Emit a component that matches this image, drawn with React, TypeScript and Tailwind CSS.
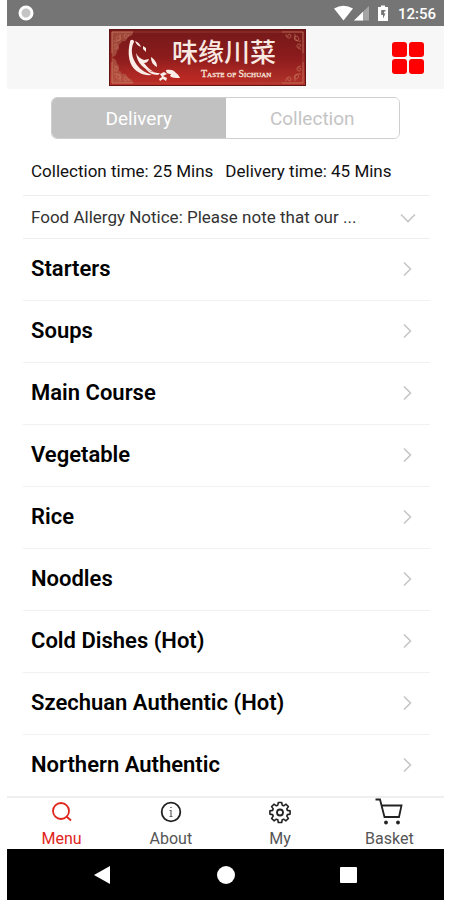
import { useState } from "react";

const categories = [
  "Starters",
  "Soups",
  "Main Course",
  "Vegetable",
  "Rice",
  "Noodles",
  "Cold Dishes (Hot)",
  "Szechuan Authentic (Hot)",
  "Northern Authentic",
];

function StatusBar() {
  return (
    <div className="flex h-[26px] items-center justify-between bg-[#757575] pr-2 pl-[11px] text-white">
      <svg width="16" height="16" viewBox="0 0 16 16" aria-hidden="true">
        <circle cx="8" cy="8" r="5" fill="#c4c4c4" />
        <circle cx="8" cy="8" r="6" fill="none" stroke="#fff" strokeWidth="3" />
      </svg>
      <div className="flex items-center pt-0.5">
        <svg width="56" height="18" viewBox="0 0 56 18" aria-hidden="true">
          <path d="M0 3.500Q9.500-2 19 3.500L9.500 15.500Z" fill="#fff" />
          <path d="M35 1V15.500H20Z" fill="#a5a5a5" />
          <path d="M29 6.800V15.500H20Z" fill="#fff" />
          <path d="M47 0.500h4v1.500h3v14H44v-14h3Z" fill="#fff" />
          <path d="M47.200 5h4.300v1.500h-1.500l.2 2h1.300l-2.500 5v-3.500h-1.800Z" fill="#757575" />
        </svg>
        <span className="ml-2 text-[15px] leading-5 font-medium">12:56</span>
      </div>
    </div>
  );
}

function CornerOrnament({ transform, filled }: { transform?: string; filled?: boolean }) {
  return (
    <g transform={transform} opacity={filled ? 0.75 : 0.6}>
      {filled && (
        <path
          d="M3 3H24c0 4-3 5-6 4 1 4-2 6-5 5-1 3-3 4-4 3 2 3 1 6-1 7 0 3-2 6-5 6Z"
          fill="#b5654f"
          opacity="0.8"
        />
      )}
      <path
        d="M3 24V3H24M5 20c5 0 5-5 2-5s-2 4 1 3M20 5c0 5-5 5-5 2s4-2 3 1M5 12c4 1 7-2 6-7M11 11c-3 2-5-1-3-3s5 0 3 3"
        fill="none"
        stroke="#cd8268"
        strokeWidth="1"
      />
    </g>
  );
}

function Logo() {
  return (
    <svg width="197" height="57" viewBox="0 0 197 57" role="img" aria-label="Taste of Sichuan">
      <defs>
        <linearGradient id="shade" x1="0" y1="0" x2="0" y2="1">
          <stop offset="0" stopColor="#74191a" />
          <stop offset="0.500" stopColor="#8c1b1c" />
          <stop offset="1" stopColor="#b4332b" />
        </linearGradient>
        <radialGradient id="glow" cx="0.400" cy="1" r="0.500">
          <stop offset="0" stopColor="#c8241f" stopOpacity="0.700" />
          <stop offset="1" stopColor="#c8241f" stopOpacity="0" />
        </radialGradient>
      </defs>
      <rect width="197" height="57" fill="url(#shade)" />
      <rect width="197" height="57" fill="url(#glow)" />
      <rect x="0.500" y="0.500" width="196" height="56" fill="none" stroke="#651414" />
      <rect x="3" y="3" width="191" height="51" fill="none" stroke="#b65a47" strokeWidth="1" opacity="0.500" />
      <CornerOrnament filled />
      <CornerOrnament filled transform="translate(0 57) scale(1 -1)" />
      <CornerOrnament transform="translate(197 0) scale(-1 1)" />
      <CornerOrnament transform="translate(197 57) scale(-1 -1)" />
      <g fill="#fbeee8">
        <path d="M21 13c0-3 4-3 4 0-3 5-3 13 1 20 4 7 9 10 17 13-9 1-16-3-20-9-4-7-4-16-2-24Z" />
        <path d="M26 12c3 1 5 3 6 6-3-1-5-3-6-6Z" />
        <path d="M34 17l3 2v4l-3-3Z" />
        <path d="M27 24c2 4 5 6 8 7l5-1c-1 3-3 4-5 4 3 4 6 7 10 9-10-2-17-9-18-19Z" />
        <path d="M42 28c3 2 6 5 6 10-4-2-6-5-6-10Z" />
        <path d="M35 37c4 5 9 7 16 7l-2 2c-6 0-11-3-14-9Z" />
        <path d="M57 41c5-1 8 0 10 3 2 1 3 3 4 5-5 0-8 0-10-2l1-2c-3 0-5-1-5-4Z" />
        <path d="M51 45l4-2 3 2-4 2 4 2-1 3-3-2-3 2-1-2 3-2Z" />
      </g>
      <text
        x="63"
        y="33"
        fill="#f8e9e2"
        fontSize="26"
        fontWeight="500"
        className="font-['Noto_Sans_CJK_TC','Noto_Sans_CJK_SC',serif]"
      >
        味缘川菜
      </text>
      <text
        x="92"
        y="48"
        fill="#f6e2da"
        stroke="#f6e2da"
        strokeWidth="0.300"
        fontSize="10"
        className="font-['Liberation_Serif',serif] [font-variant:small-caps]"
      >
        Taste of Sichuan
      </text>
    </svg>
  );
}

function Header() {
  return (
    <header className="grid h-[63px] grid-cols-[1fr_auto_1fr] items-center bg-[#f7f7f7] pr-5">
      <div />
      <div className="mr-4">
        <Logo />
      </div>
      <button type="button" aria-label="Categories" className="grid grid-cols-2 gap-[2px] justify-self-end">
        <span className="size-[15px] rounded-[3px] bg-[#fe0000]" />
        <span className="size-[15px] rounded-[3px] bg-[#fe0000]" />
        <span className="size-[15px] rounded-[3px] bg-[#fe0000]" />
        <span className="size-[15px] rounded-[3px] bg-[#fe0000]" />
      </button>
    </header>
  );
}

function OrderModeToggle() {
  const [mode, setMode] = useState("Delivery");
  return (
    <div className="mx-11 mt-2 flex h-[42px] overflow-hidden rounded-md border border-[#cfcfcf]">
      {["Delivery", "Collection"].map((name) => (
        <button
          key={name}
          type="button"
          aria-pressed={mode === name}
          onClick={() => setMode(name)}
          className={`flex-1 pt-0.5 text-[19px] ${mode === name ? "bg-[#c1c1c1] text-white" : "bg-white text-[#c4c4c4]"}`}
        >
          {name}
        </button>
      ))}
    </div>
  );
}

function Chevron({ down }: { down?: boolean }) {
  return (
    <svg width="18" height="18" viewBox="0 0 18 18" fill="none" stroke="#c6c6c6" strokeWidth="1.600" aria-hidden="true">
      <path d={down ? "M3 5.500L10 12.500L17 5.500" : "M6 2.500L12.500 9L6 15.500"} />
    </svg>
  );
}

const tabIcons = {
  Menu: (
    <>
      <circle cx="11" cy="11" r="8" />
      <path d="M16.500 16.500l4.500 4" />
    </>
  ),
  About: (
    <>
      <circle cx="12" cy="12" r="9.300" />
      <path
        d="M10.500 10.500H12V16.500M10.500 16.500h3M11.200 7.500h1.600"
        stroke="#666666"
        strokeWidth="1.200"
      />
    </>
  ),
  My: (
    <>
      <path d="M10.300 2.500h3.400l.5 2.700 1.500.6 2.300-1.600 2.400 2.400-1.600 2.300.6 1.500 2.700.5v3.200l-2.700.5-.6 1.500 1.600 2.300-2.400 2.400-2.300-1.600-1.500.6-.5 2.700h-3.400l-.5-2.700-1.500-.6-2.300 1.600-2.400-2.400 1.600-2.300-.6-1.500-2.700-.5v-3.200l2.700-.5.6-1.500-1.600-2.300L6 4.200l2.300 1.600 1.500-.6Z" strokeWidth="1.600" strokeLinejoin="round" />
      <circle cx="12" cy="12.500" r="3" />
    </>
  ),
  Basket: (
    <>
      <path d="M-1.500-.5h4.500L7.500 17H22L24.500 5.500H5" />
      <circle cx="9" cy="22.500" r="1.300" fill="currentColor" strokeWidth="1.200" />
      <circle cx="21" cy="22.500" r="1.300" fill="currentColor" strokeWidth="1.200" />
    </>
  ),
};

function TabBar() {
  return (
    <nav className="grid h-[53px] grid-cols-4 border-t-2 border-[#efefef] bg-white">
      {(Object.keys(tabIcons) as (keyof typeof tabIcons)[]).map((name) => (
        <button
          key={name}
          type="button"
          aria-current={name === "Menu" ? "page" : undefined}
          className={`flex flex-col items-center pt-0.5 ${name === "Menu" ? "text-[#e0251b]" : "text-[#222222]"}`}
        >
          <svg
            width="24"
            height="24"
            viewBox="0 0 24 24"
            fill="none"
            stroke="currentColor"
            strokeWidth="1.800"
            className="overflow-visible"
            aria-hidden="true"
          >
            {tabIcons[name]}
          </svg>
          <span className={`mt-[5px] text-base leading-5 ${name === "Menu" ? "" : "text-[#555555]"}`}>{name}</span>
        </button>
      ))}
    </nav>
  );
}

function SystemNav() {
  return (
    <div className="flex h-[51px] items-center justify-center gap-[103px] bg-black text-white">
      <button type="button" aria-label="Back">
        <svg width="20" height="20" viewBox="0 0 20 20" fill="currentColor">
          <path d="M1 10L17 1V19Z" />
        </svg>
      </button>
      <button type="button" aria-label="Home">
        <svg width="20" height="20" viewBox="0 0 20 20" fill="currentColor">
          <circle cx="10" cy="10" r="9" />
        </svg>
      </button>
      <button type="button" aria-label="Recent apps">
        <svg width="20" height="20" viewBox="0 0 20 20" fill="currentColor">
          <rect x="1" y="2" width="17" height="16" rx="1" />
        </svg>
      </button>
    </div>
  );
}

export default function App() {
  return (
    <div className="min-h-screen bg-white pr-1.5 pl-[7px] font-[Roboto,sans-serif] text-black">
      <div className="flex min-h-screen flex-col">
        <StatusBar />
        <Header />
        <main className="flex-1">
          <OrderModeToggle />
          <div className="mr-3.5 ml-4">
            <div className="flex h-[57px] items-center gap-3 border-b border-[#eeeeee] pt-2.5 pl-2 text-[17px] whitespace-nowrap text-[#111111]">
              <span>Collection time: 25 Mins</span>
              <span>Delivery time: 45 Mins</span>
            </div>
            <button
              type="button"
              aria-expanded="false"
              className="flex h-[43px] w-full items-center justify-between border-b border-[#eeeeee] pt-0.5 pr-3.5 pl-2 text-[17px] text-[#333333]"
            >
              <span className="truncate">Food Allergy Notice: Please note that our ...</span>
              <Chevron down />
            </button>
            <ul>
              {categories.map((name) => (
                <li key={name} className="border-b border-[#f1f1f1] last:border-b-0">
                  <a
                    href="#"
                    className="flex h-[61px] items-center justify-between pr-3.5 pb-0.5 pl-2 text-[22px] font-semibold"
                  >
                    {name}
                    <Chevron />
                  </a>
                </li>
              ))}
            </ul>
          </div>
        </main>
        <TabBar />
        <SystemNav />
      </div>
    </div>
  );
}
